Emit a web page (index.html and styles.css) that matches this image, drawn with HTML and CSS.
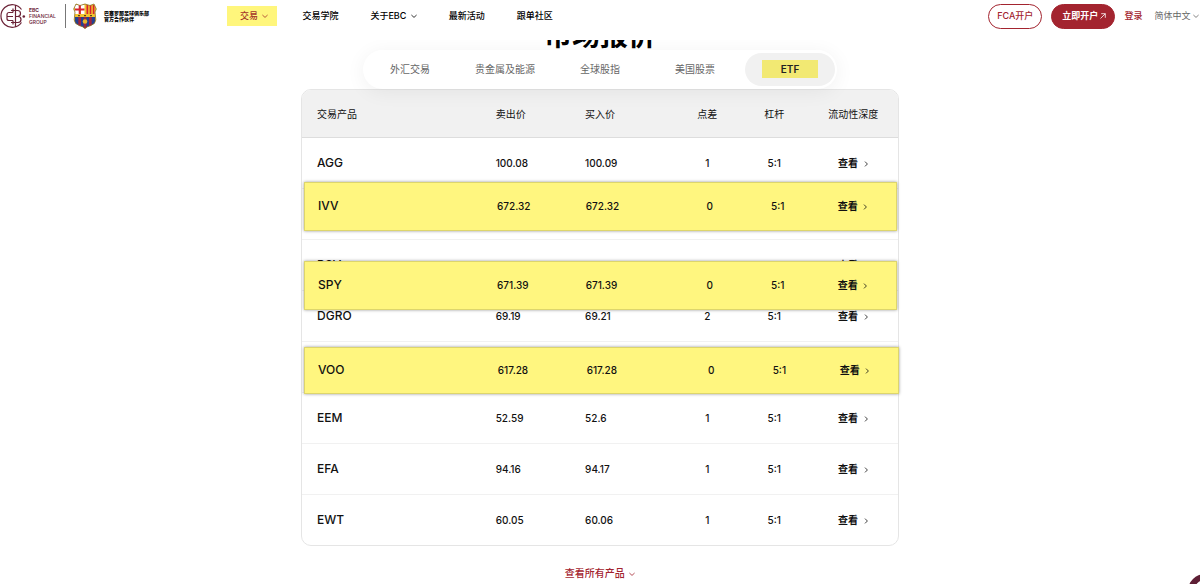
FILE: index.html
```html
<!DOCTYPE html>
<html lang="zh-CN">
<head>
    <meta charset="UTF-8">
    <meta name="viewport" content="width=device-width, initial-scale=1.0">
    <title>EBC 市场报价</title>
    <link rel="stylesheet" href="styles.css">
</head>
<body>

    <!-- Shared icons -->
    <svg class="sprite" width="0" height="0" aria-hidden="true">
        <symbol id="down" viewBox="0 0 6 6"><path d="M.4 2L3 4.400 5.600 2" fill="none" stroke="currentColor" stroke-width=".8"/></symbol>
        <symbol id="right" viewBox="0 0 6 6"><path d="M2 .6L4.400 3 2 5.400" fill="none" stroke="currentColor" stroke-width=".8"/></symbol>
        <symbol id="out" viewBox="0 0 6 6"><path d="M.5 5.500L5.300 .7M1.200 .7h4.100v4.100" fill="none" stroke="currentColor" stroke-width=".8"/></symbol>
    </svg>

    <header class="topbar">
        <a class="brand" href="#">
            <svg class="mark" viewBox="0 0 26 26" aria-hidden="true">
                <g fill="none" stroke="#6b2337" stroke-width="1.2">
                    <path d="M21.500 6.500A11.300 11.300 0 1 0 21.500 19.500"/>
                    <path d="M13 9.500H9A2 2 0 0 0 7 11.500v4a2 2 0 0 0 2 2h4M7 13.500h6"/>
                    <path d="M13 5.500v4M13 17.500v4M15.500 2v22M11 7.500h6.500a2.800 2.800 0 0 1 0 6H15.500M15.500 13.500h2.500a3 3 0 0 1 0 6H11"/>
                </g>
                <circle cx="23.800" cy="13.500" r="1.300" fill="#6b2337"/>
            </svg>
            <span class="brand-name"><b>EBC</b><br>FINANCIAL<br>GROUP</span>
        </a>
        <a class="partner" href="#">
            <svg class="crest" viewBox="0 0 24 26" aria-hidden="true">
                <clipPath id="shield"><path d="M3 1l4 1.5L12 1l5 1.5L21 1l2.3 5-1.3 3 .8 8q-.5 4-5 5.5Q14 23.5 12 25.5 10 23.5 6.200 22.500 1.700 21 1.200 17L2 9 .7 6z"/></clipPath>
                <g clip-path="url(#shield)">
                    <path fill="#f2c230" d="M0 0h24v26H0z"/>
                    <path fill="#fff" d="M2 2h9.500v9H2z"/>
                    <path fill="#d8232f" d="M5.700 2h2.200v9H5.700zM2 5.400h9.500v2.100H2zM13.500 2h1.700v9h-1.700zM16.700 2h1.600v9h-1.600zM19.800 2h1.600v9h-1.600z"/>
                    <path fill="#24418f" d="M2 14h20v8l-10 4-10-4z"/>
                    <path fill="#a3243b" d="M5.300 14h2.700v10H5.300zM10.700 14h2.700v12h-2.700zM16 14h2.700v10H16z"/>
                    <path fill="#5d4420" d="M5 12h2v1.200H5zM11 12h2v1.200h-2zM17 12h2v1.200h-2z"/>
                    <circle cx="12" cy="18.500" r="2.300" fill="#e7b62d"/>
                </g>
                <path d="M3 1l4 1.500L12 1l5 1.500L21 1l2.300 5-1.300 3 .8 8q-.5 4-5 5.500Q14 23.500 12 25.500 10 23.500 6.200 22.500 1.700 21 1.200 17L2 9 .7 6z" fill="none" stroke="#8b6d27" stroke-width=".8"/>
            </svg>
            <span class="partner-name">巴塞罗那足球俱乐部<br>官方合作伙伴</span>
        </a>

        <nav class="nav">
            <a class="active" href="#">交易 <svg class="icon"><use href="#down"/></svg></a>
            <a href="#">交易学院</a>
            <a href="#">关于EBC <svg class="icon"><use href="#down"/></svg></a>
            <a href="#">最新活动</a>
            <a href="#">跟单社区</a>
        </nav>

        <div class="actions">
            <button class="btn">FCA开户</button>
            <button class="btn btn-solid">立即开户 <svg class="icon"><use href="#out"/></svg></button>
            <a class="login" href="#">登录</a>
            <button class="lang">简体中文 <svg class="icon"><use href="#down"/></svg></button>
        </div>
    </header>

    <main>
        <h1>市场报价</h1>

        <div class="tabs">
            <button>外汇交易</button>
            <button>贵金属及能源</button>
            <button>全球股指</button>
            <button>美国股票</button>
            <button class="active"><span>ETF</span></button>
        </div>

        <div class="quotes">
            <table>
                <thead>
                    <tr><th>交易产品</th><th>卖出价</th><th>买入价</th><th>点差</th><th>杠杆</th><th>流动性深度</th></tr>
                </thead>
                <tbody>
                    <tr><td>AGG</td><td>100.08</td><td>100.09</td><td>1</td><td>5:1</td><td><a href="#">查看 <svg class="icon"><use href="#right"/></svg></a></td></tr>
                    <tr><td colspan="6"></td></tr>
                    <tr><td>BSV</td><td>78.83</td><td>78.84</td><td>1</td><td>5:1</td><td><a href="#">查看 <svg class="icon"><use href="#right"/></svg></a></td></tr>
                    <tr><td>DGRO</td><td>69.19</td><td>69.21</td><td>2</td><td>5:1</td><td><a href="#">查看 <svg class="icon"><use href="#right"/></svg></a></td></tr>
                    <tr><td colspan="6"></td></tr>
                    <tr><td>EEM</td><td>52.59</td><td>52.6</td><td>1</td><td>5:1</td><td><a href="#">查看 <svg class="icon"><use href="#right"/></svg></a></td></tr>
                    <tr><td>EFA</td><td>94.16</td><td>94.17</td><td>1</td><td>5:1</td><td><a href="#">查看 <svg class="icon"><use href="#right"/></svg></a></td></tr>
                    <tr><td>EWT</td><td>60.05</td><td>60.06</td><td>1</td><td>5:1</td><td><a href="#">查看 <svg class="icon"><use href="#right"/></svg></a></td></tr>
                </tbody>
            </table>

            <!-- Highlighted rows floating over the table -->
            <div class="pick pick-ivv">
                <table><tbody>
                    <tr><td>IVV</td><td>672.32</td><td>672.32</td><td>0</td><td>5:1</td><td><a href="#">查看 <svg class="icon"><use href="#right"/></svg></a></td></tr>
                </tbody></table>
            </div>
            <div class="pick pick-spy">
                <table><tbody>
                    <tr><td>SPY</td><td>671.39</td><td>671.39</td><td>0</td><td>5:1</td><td><a href="#">查看 <svg class="icon"><use href="#right"/></svg></a></td></tr>
                </tbody></table>
            </div>
            <div class="pick pick-voo">
                <table><tbody>
                    <tr><td>VOO</td><td>617.28</td><td>617.28</td><td>0</td><td>5:1</td><td><a href="#">查看 <svg class="icon"><use href="#right"/></svg></a></td></tr>
                </tbody></table>
            </div>
        </div>

        <a class="more" href="#">查看所有产品 <svg class="icon"><use href="#down"/></svg></a>
    </main>

    <button class="chat" aria-label="Chat"></button>

</body>
</html>
```
FILE: styles.css
```css
* {
    box-sizing: border-box;
}
body {
    margin: 0;
    background: #fff;
    color: #111;
    font-family: Inter, "Noto Sans CJK SC", sans-serif;
    font-size: 10px;
    line-height: 14px;
}
a {
    color: inherit;
    text-decoration: none;
}
button {
    font: inherit;
    color: inherit;
    background: none;
    border: none;
    padding: 0;
    cursor: pointer;
}
.sprite {
    position: absolute;
}
.icon {
    width: 6px;
    height: 6px;
    margin-left: 2px;
}

/* Top bar */
.topbar {
    position: relative;
    z-index: 2;
    display: flex;
    align-items: center;
    height: 40px;
    padding: 0 1px 8px 0;
    background: #fff;
    font-size: 9px;
    white-space: nowrap;
}
.brand {
    display: flex;
    align-items: center;
    gap: 3px;
    height: 24px;
    width: 66px;
    border-right: 1px solid #777;
    color: #6b2337;
}
.mark {
    width: 26px;
    height: 26px;
}
.brand-name {
    font-size: 5px;
    line-height: 6px;
    font-weight: 500;
}
.partner {
    display: flex;
    align-items: center;
    gap: 7px;
    margin-left: 7px;
    color: #000;
}
.crest {
    width: 24px;
    height: 26px;
}
.partner-name {
    font-size: 5px;
    line-height: 6px;
    font-weight: 900;
}
.nav {
    display: flex;
    align-items: center;
    margin-left: 78px;
    gap: 32px;
    font-weight: 500;
    color: #000;
}
.nav .active {
    margin-right: -7px;
    padding: 3px 9px 3px 13px;
    background: #fff67c;
    color: #a5352b;
}
.actions {
    display: flex;
    align-items: center;
    margin-left: auto;
    gap: 9px;
    color: #a3242f;
    font-weight: 500;
}
.btn {
    height: 25px;
    padding: 0 8px;
    border: 1px solid #a3242f;
    border-radius: 13px;
}
.btn-solid {
    padding: 0 8px 0 10px;
    background: #a3242f;
    color: #fff;
    font-weight: 700;
}
.btn-solid .icon {
    margin-left: 0;
}
.lang {
    margin-left: 3px;
    color: #666;
    font-weight: 400;
}
.lang .icon {
    margin-left: 0;
}

/* Title and tabs */
h1 {
    margin: -23px 0 -5px;
    color: #000;
    font-size: 28px;
    line-height: 38px;
    font-weight: 700;
    text-align: center;
}
.tabs {
    position: relative;
    z-index: 1;
    display: flex;
    gap: 5px;
    width: fit-content;
    margin: 0 auto;
    padding: 3px 2px;
    border-radius: 20px;
    background: #fff;
    box-shadow: 0 3px 20px rgba(0, 0, 0, 0.06);
    color: #666;
}
.tabs button {
    width: 90px;
    height: 33px;
    padding-bottom: 2px;
    border-radius: 17px;
}
.tabs .active {
    background: #f1f1f1;
    color: #222;
    font-weight: 600;
}
.tabs .active span {
    display: inline-block;
    padding: 2px 19px;
    background: #f2e973;
}

/* Quotes table */
.quotes {
    position: relative;
    width: calc(50% - 2px);
    margin: 0 auto;
    border: 1px solid #e5e5e5;
    border-radius: 10px;
}
table {
    width: 100%;
    table-layout: fixed;
    border-collapse: separate;
    border-spacing: 0;
}
th, td {
    padding: 0;
    text-align: center;
    font-weight: 500;
}
th {
    height: 48px;
    background: #f1f1f1;
    border-bottom: 1px solid #ddd;
    font-weight: 400;
}
td {
    height: 51px;
    padding-bottom: 1px;
    border-bottom: 1px solid #f1f1f1;
}
td a {
    font-weight: 600;
}
td .icon {
    margin-left: 2px;
}
tbody tr:last-child td {
    height: 50px;
    border-bottom: none;
}
th:first-child {
    border-top-left-radius: 9px;
}
th:last-child {
    border-top-right-radius: 9px;
}
tr > :nth-child(-n+3) {
    width: 15%;
    text-align: left;
}
tr > :first-child {
    width: 32.5%;
    padding-left: 15px;
}
tr > :nth-child(4) {
    width: 11%;
}
tr > :nth-child(5) {
    width: 11.5%;
}
td:first-child {
    font-size: 12px;
}
.pick {
    position: absolute;
    left: 2px;
    right: 1px;
    background: #fff67f;
    border: 1px solid #ddd56c;
    box-shadow: 0 0 3px rgba(0, 0, 0, 0.4);
}
.pick tbody tr td {
    height: 47px;
    padding-bottom: 1px;
}
.pick td:first-child {
    padding-left: 13px;
}
.pick td:nth-child(4) {
    width: 12%;
}
.pick td:nth-child(5) {
    width: 11%;
}
.pick-ivv {
    top: 92px;
}
.pick-spy {
    top: 171px;
}
.pick-voo {
    top: 257px;
    right: -1px;
}
.pick-voo tbody tr td {
    height: 45px;
}
.more {
    display: block;
    width: fit-content;
    margin: 20px auto 0;
    color: #a3242f;
    font-weight: 500;
}

/* Chat bubble, peeking in at the corner */
.chat {
    position: fixed;
    right: -22px;
    bottom: -24px;
    width: 34px;
    height: 34px;
    border: 6px solid #5e1f35;
    border-radius: 50%;
}
```
